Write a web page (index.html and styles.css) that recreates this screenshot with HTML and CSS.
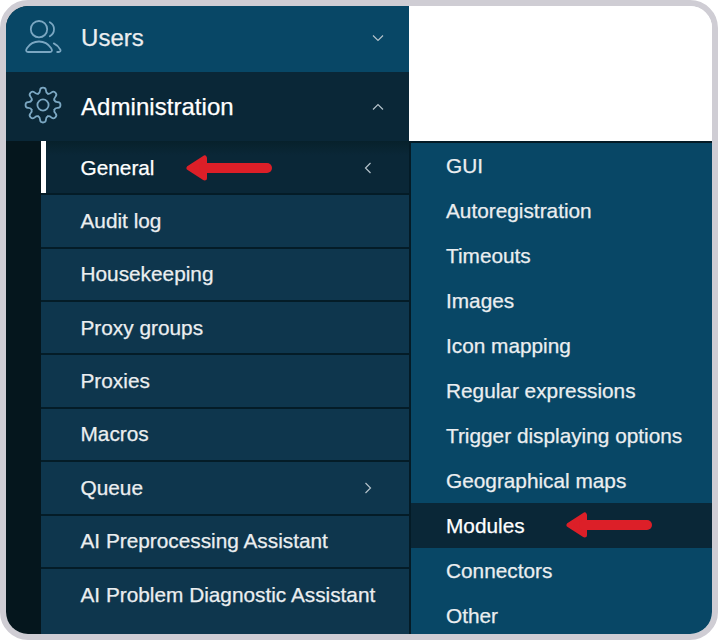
FILE: index.html
```html
<!DOCTYPE html>
<html lang="en">
<head>
<meta charset="utf-8">
<title>Administration</title>
<link rel="stylesheet" href="styles.css">
</head>
<body>
<div class="frame">
  <nav class="sidebar">
    <div class="main users">
      <svg class="icon" viewBox="0 0 40 40"><circle cx="16" cy="11.2" r="8.2"/><path d="M26.8 4.3C32.4 7.5 32.4 15 26.8 18.3M5 34C2.6 34 2.8 32 4.1 30C9.8 21.3 22.3 21.3 28 30C29.3 32 29.5 34 27.1 34ZM30.8 25.4C33.8 26.8 35.9 28.9 37.4 31.7C37.9 33 37.2 34 35.7 34H34.2"/></svg>
      <span>Users</span>
      <svg class="chev" viewBox="0 0 12 12"><path d="M1 3.5L6 8.5L11 3.5"/></svg>
    </div>
    <div class="main admin">
      <svg class="icon gear" viewBox="-20 -20 40 40"><defs><path id="tooth" d="M-4.7-11.4C-2.9-12.1-3-14-2.9-15C-2.6-18.3 2.6-18.3 2.9-15C3-14 2.9-12.1 4.7-11.4"/></defs><circle r="5.6"/><use href="#tooth"/><use href="#tooth" transform="rotate(45)"/><use href="#tooth" transform="rotate(90)"/><use href="#tooth" transform="rotate(135)"/><use href="#tooth" transform="rotate(180)"/><use href="#tooth" transform="rotate(225)"/><use href="#tooth" transform="rotate(270)"/><use href="#tooth" transform="rotate(315)"/></svg>
      <span>Administration</span>
      <svg class="chev" viewBox="0 0 12 12"><path d="M1 8.5L6 3.5L11 8.5"/></svg>
    </div>
    <div class="sub">
      <div class="row current"><span>General</span>
        <svg class="arrow" viewBox="0 0 86 26"><path d="M3 13L18.5 3V23Z"/><path class="shaft" d="M18 13H81"/></svg>
        <svg class="chev" viewBox="0 0 12 12"><path d="M8.5 1L3.5 6L8.5 11"/></svg></div>
      <div class="row"><span>Audit log</span></div>
      <div class="row"><span>Housekeeping</span></div>
      <div class="row"><span>Proxy groups</span></div>
      <div class="row"><span>Proxies</span></div>
      <div class="row"><span>Macros</span></div>
      <div class="row"><span>Queue</span><svg class="chev" viewBox="0 0 12 12"><path d="M3.5 1L8.5 6L3.5 11"/></svg></div>
      <div class="row"><span>AI Preprocessing Assistant</span></div>
      <div class="row"><span>AI Problem Diagnostic Assistant</span></div>
    </div>
  </nav>
  <div class="content">
    <div class="flyout">
      <div class="item">GUI</div>
      <div class="item">Autoregistration</div>
      <div class="item">Timeouts</div>
      <div class="item">Images</div>
      <div class="item">Icon mapping</div>
      <div class="item">Regular expressions</div>
      <div class="item">Trigger displaying options</div>
      <div class="item">Geographical maps</div>
      <div class="item selected"><span>Modules</span><svg class="arrow" viewBox="0 0 86 26"><path d="M3 13L18.5 3V23Z"/><path class="shaft" d="M18 13H81"/></svg></div>
      <div class="item">Connectors</div>
      <div class="item">Other</div>
    </div>
  </div>
</div>
</body>
</html>
```
FILE: styles.css
```css
* { box-sizing: border-box; }
body {
  margin: 0;
  background: #fff;
  font-family: "Liberation Sans", Arial, sans-serif;
  color: #ebeef0;
  -webkit-text-stroke: 0.25px;
}
.frame {
  display: flex;
  width: 718px;
  height: 640px;
  border: 6px solid #cfcdd4;
  border-radius: 28px;
  overflow: hidden;
}
.sidebar { width: 403px; flex: none; background: #05161d; }
.main {
  display: flex;
  align-items: center;
  padding: 0 25px 0 17px;
  font-size: 24px;
}
.main span { flex: 1; margin-left: 18px; letter-spacing: 0.05px; }
.users { height: 66px; background: #084766; padding-bottom: 2px; }
.admin { height: 69px; background: #0a2737; color: #fff; }
.icon {
  width: 40px;
  height: 40px;
  fill: none;
  stroke: #7ba7c2;
  stroke-width: 1.8;
  stroke-linejoin: round;
  stroke-linecap: round;
}
.gear { margin: 0 0.5px 4px -0.5px; }
.chev {
  width: 12px;
  height: 12px;
  margin-left: auto;
  fill: none;
  stroke: #b4c2ca;
  stroke-width: 1.2;
}
.sub { margin-left: 35px; font-size: 20.8px; white-space: nowrap; }
.row {
  display: flex;
  align-items: center;
  height: 53.4px;
  padding: 0 35px 0 39.5px;
  background: #0e364d;
  border-bottom: 2px solid #041c27;
}
.row:last-child { height: 66px; padding-bottom: 13px; border: 0; }
.current {
  height: 54.2px;
  padding-top: 1px;
  color: #fff;
  background: linear-gradient(90deg, #fff 5px, transparent 5px), linear-gradient(#07212b, #0a2737 14px);
}
.arrow {
  width: 86px;
  height: 26px;
  fill: #dc1f28;
  stroke: #dc1f28;
  stroke-width: 5;
  stroke-linejoin: round;
  stroke-linecap: round;
}
.shaft { stroke-width: 10; }
.row .arrow { margin-left: 31px; }
.content { flex: 1; padding-top: 135px; background: #fff; }
.flyout {
  height: 493px;
  border-top: 2px solid #041b26;
  border-left: 2px solid #041b26;
  background: #084766;
  font-size: 20.8px;
}
.item {
  display: flex;
  align-items: center;
  height: 45px;
  padding-left: 35px;
}
.selected { background: #0a2737; color: #fff; }
.selected .arrow { margin: 0 0 1px 41px; }
```
